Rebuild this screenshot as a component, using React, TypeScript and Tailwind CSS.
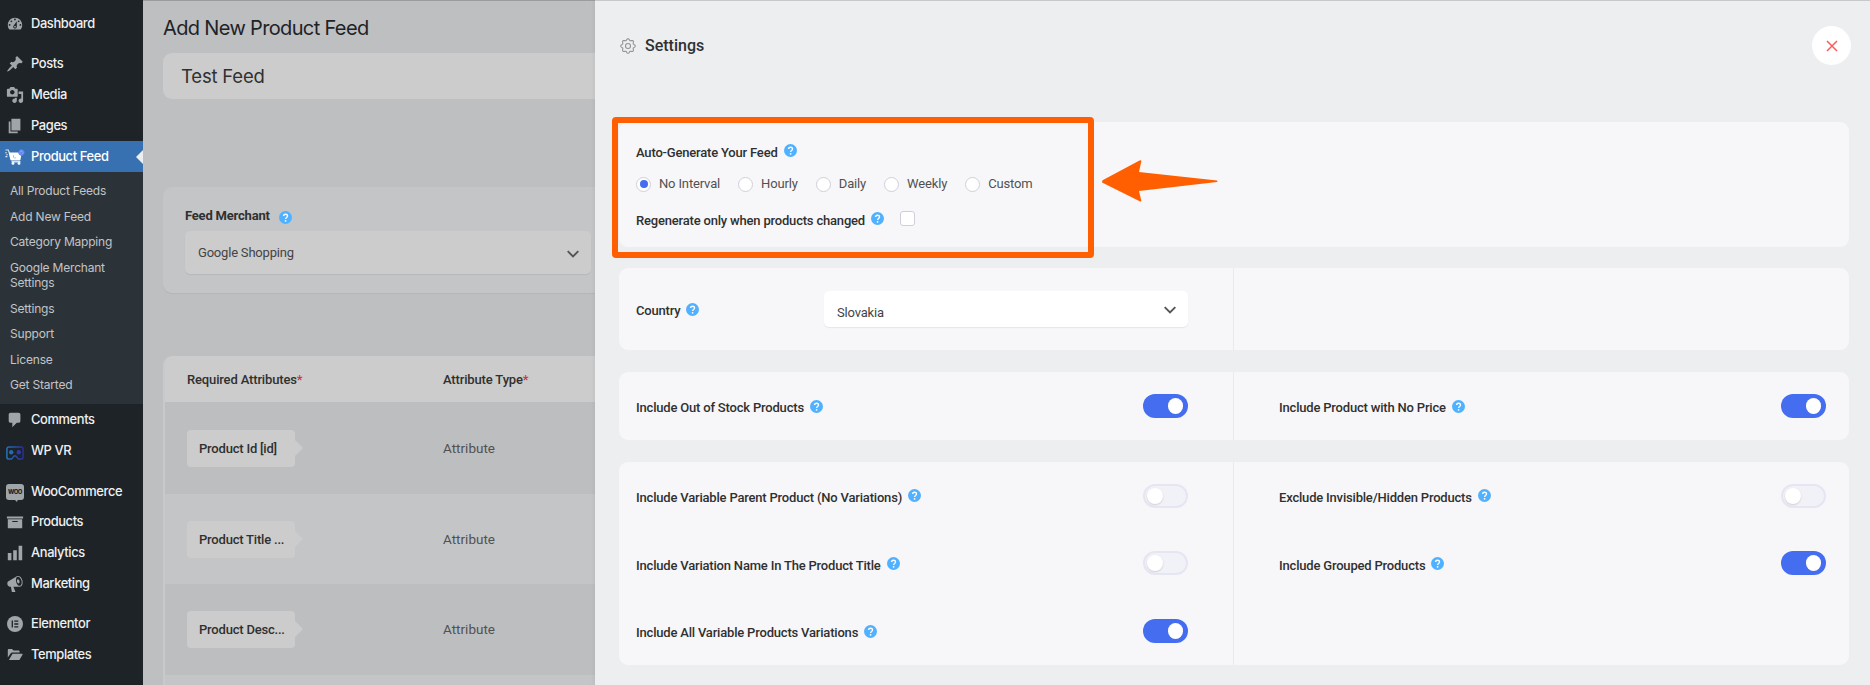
import React from 'react';

const DASHBOARD = 'M3.76 16h12.48c1.1-1.37 1.76-3.11 1.76-5 0-4.42-3.58-8-8-8s-8 3.58-8 8c0 1.89.66 3.63 1.76 5zM10 4c.55 0 1 .45 1 1s-.45 1-1 1-1-.45-1-1 .45-1 1-1zM6 6c.55 0 1 .45 1 1s-.45 1-1 1-1-.45-1-1 .45-1 1-1zm8 0c.55 0 1 .45 1 1s-.45 1-1 1-1-.45-1-1 .45-1 1-1zm-5.37 5.55L12 7v6c0 1.1-.9 2-2 2s-2-.9-2-2c0-.57.24-1.08.63-1.45zM4 10c.55 0 1 .45 1 1s-.45 1-1 1-1-.45-1-1 .45-1 1-1zm12 0c.55 0 1 .45 1 1s-.45 1-1 1-1-.45-1-1 .45-1 1-1zm-5 3c0-.55-.45-1-1-1s-1 .45-1 1 .45 1 1 1 1-.45 1-1z';
const PIN = 'M10.44 3.02l1.82-1.82 6.36 6.35-1.83 1.82c-1.05-.68-2.48-.57-3.41.36l-.75.75c-.92.93-1.04 2.35-.35 3.41l-1.83 1.82-2.41-2.41-2.8 2.79c-.42.42-3.38 2.71-3.8 2.29s1.86-3.39 2.28-3.81l2.79-2.79L4.1 9.36l1.83-1.82c1.05.69 2.48.57 3.4-.36l.75-.75c.93-.92 1.05-2.35.36-3.41z';
const MEDIA = 'M13 11V4c0-.55-.45-1-1-1h-1.67L9 1H5L3.67 3H2c-.55 0-1 .45-1 1v7c0 .55.45 1 1 1h10c.55 0 1-.45 1-1zM7 4.5c1.38 0 2.5 1.12 2.5 2.5S8.38 9.5 7 9.5 4.5 8.38 4.5 7 5.62 4.5 7 4.5zM14 6h5v10.5c0 1.38-1.12 2.5-2.5 2.5S14 17.88 14 16.5s1.12-2.5 2.5-2.5c.17 0 .34.02.5.05V9h-3V6zm-4 8.05V13h2v3.5c0 1.38-1.12 2.5-2.5 2.5S7 17.88 7 16.5 8.12 14 9.5 14c.17 0 .34.02.5.05z';
const PAGES = 'M6 15V2h10v13H6zm-1 1h8v2H3V5h2v11z';
const COMMENTS = 'M5 2h9c1.1 0 2 .9 2 2v7c0 1.1-.9 2-2 2h-2l-5 5v-5H5c-1.1 0-2-.9-2-2V4c0-1.1.9-2 2-2z';
const ARCHIVE = 'M19 4v2H1V4h18zM2 7h16v10H2V7zm11 3V9H7v1h6z';
const BARS = 'M18 18V2h-4v16h4zm-6 0V7H8v11h4zm-6 0v-8H2v8h4z';
const MEGAPHONE = 'M18.15 5.94c.46 1.62.38 3.22-.02 4.48-.42 1.28-1.26 2.18-2.3 2.48-.16.06-.26.06-.4.06-.06.02-.12.02-.18.02-.06.02-.14.02-.22.02h-6.8l2.22 5.5c.02.14-.06.26-.14.34-.08.1-.24.16-.34.16H6.95c-.1 0-.26-.06-.34-.16-.08-.08-.16-.2-.14-.34l-1-5.5H4.25l-.02-.02c-.5.06-1.08-.18-1.54-.62s-.88-1.08-1.06-1.88c-.24-.8-.2-1.56-.02-2.2.18-.62.58-1.08 1.06-1.3l.02-.02 9-5.4c.1-.06.18-.1.24-.16.06-.04.14-.08.24-.12.16-.08.28-.12.5-.18 1.04-.3 2.24.1 3.22.98s1.84 2.24 2.26 3.86zm-2.58 5.98h-.02c.4-.1.74-.34 1.04-.7.58-.7.86-1.76.86-3.04 0-.64-.1-1.3-.28-1.98-.34-1.36-1.02-2.5-1.78-3.24s-1.68-1.1-2.46-.88c-.82.22-1.4.96-1.7 2-.32 1.04-.28 2.36.06 3.72.38 1.36 1 2.5 1.8 3.24.78.74 1.62 1.1 2.48.88zm-2.54-7.08c.22-.04.42-.02.62.04.38.16.76.48 1.02 1s.42 1.2.42 1.78c0 .3-.04.56-.12.8-.18.48-.44.84-.86.94-.34.1-.8-.06-1.14-.4s-.64-.86-.78-1.5c-.18-.62-.12-1.24.02-1.72s.48-.84.82-.94z';

// Eight-lobed gear outline
const GEAR_POINTS = Array.from({ length: 96 }, (_, i) => {
  const a = (i / 96) * Math.PI * 2;
  const r = 9.7 + 1.2 * Math.cos(8 * a);
  return `${(12 + r * Math.cos(a)).toFixed(2)},${(12 + r * Math.sin(a)).toFixed(2)}`;
}).join(' ');

const MenuIcon = ({ d }: { d: string }) => (
  <svg viewBox="0 0 20 20" className="h-[18px] w-[18px] fill-[#a0a5aa]">
    <path fillRule="evenodd" d={d} />
  </svg>
);

const CartIcon = () => (
  <svg viewBox="0 0 20 16" className="h-4 w-5">
    <path d="M.5 1h2.700l1.300 3M.2 3.800h1.600M1.200 5.800h1.600M.4 7.600h2" stroke="#dbe8f7" strokeWidth="1.1" fill="none" />
    <path d="M3.600 3.600h13.200l-1.300 6.900c-.1.700-.6 1.100-1.300 1.100H6.700c-.7 0-1.200-.4-1.400-1.100z" fill="#fff" />
    <path d="M6.500 12.800h9" stroke="#fff" strokeWidth="1.2" />
    <circle cx="8" cy="14.400" r="1.4" fill="#fff" />
    <circle cx="14" cy="14.400" r="1.4" fill="#fff" />
    <path d="M8.500 6.200v2.100c.6 1 2 1 2.600 0" stroke="#8db5e6" strokeWidth="0.8" fill="none" />
    <circle cx="16.500" cy="3.400" r="2.800" fill="#7ba2f0" stroke="#4a73e6" strokeWidth="0.9" />
    <path d="M15.400 3.500l.8.9 1.500-1.700" stroke="#3f66dd" strokeWidth="0.8" fill="none" />
  </svg>
);

const VrIcon = () => (
  <svg viewBox="0 0 18 14" className="mt-1 h-[14px] w-[18px]">
    <defs>
      <linearGradient id="vr" x1="0" x2="1">
        <stop offset="0" stopColor="#2373b8" />
        <stop offset="1" stopColor="#2a2c9c" />
      </linearGradient>
    </defs>
    <path d="M3 .9h12a2.1 2.1 0 0 1 2.1 2.1v8a2.1 2.1 0 0 1-2.1 2.1h-2.6L10.3 10.4a1.7 1.7 0 0 0-2.6 0L5.6 13.1H3A2.1 2.1 0 0 1 .9 11V3A2.1 2.1 0 0 1 3 .9z" fill="none" stroke="url(#vr)" strokeWidth="1.5" />
    <circle cx="5.2" cy="6.3" r="2.2" fill="#2668b4" />
    <circle cx="12.8" cy="6.3" r="2.2" fill="#2b3bab" />
  </svg>
);

const WooIcon = () => (
  <span className="relative flex h-4 w-[18px] items-center justify-center rounded-[3px] bg-[#a0a5aa] font-['Inter',sans-serif] text-[6px] leading-none font-extrabold tracking-[-0.5px] text-[#1d2327]">
    WOO
    <svg viewBox="0 0 4 3" className="absolute top-[15px] left-[8px] h-[3px] w-1 fill-[#a0a5aa]"><path d="M0 0h4L3 3z" /></svg>
  </span>
);

const ElementorIcon = () => (
  <svg viewBox="0 0 16 16" className="h-4 w-4">
    <circle cx="8" cy="8" r="8" fill="#a0a5aa" />
    <path d="M5.3 4.5v7M7.3 5.2h4M7.3 8h4M7.3 10.8h4" stroke="#1d2327" strokeWidth="1.3" />
  </svg>
);

const FolderIcon = () => (
  <svg viewBox="0 0 16 13" className="h-[13px] w-4 fill-[#a0a5aa]">
    <path d="M.8 9.5V2c0-.6.5-1.1 1.1-1.1H5l1.5 1.6h5c.6 0 1.1.5 1.1 1.1v1H5.4c-.7 0-1.4.4-1.8 1z" />
    <path d="M5.5 5.7h9.4c.6 0 .9.6.6 1.1l-2.8 4.6c-.2.4-.6.6-1 .6H1.9z" />
  </svg>
);

const MenuItem = ({ icon, label, active }: { icon: React.ReactNode; label: string; active?: boolean }) => (
  <li className={active ? 'relative flex h-[31px] items-center bg-[#3871b1] text-white' : 'flex h-[31px] items-center text-[#f0f0f1]'}>
    <span className="ml-[5px] flex w-5 justify-center">{icon}</span>
    <span className="ml-[6px] text-[12.9px] font-medium tracking-[-0.38px]">{label}</span>
    {active && (
      <svg viewBox="0 0 7 14" className="absolute top-[9px] right-0 h-[14px] w-[7px] fill-[#edeef0]"><path d="M7 0v14L0 7z" /></svg>
    )}
  </li>
);

const Sidebar = () => (
  <aside className="h-full w-[143px] shrink-0 bg-[#1d2327] pt-2 font-['Inter',sans-serif]">
    <ul>
      <MenuItem icon={<MenuIcon d={DASHBOARD} />} label="Dashboard" />
    </ul>
    <ul className="mt-[9px]">
      <MenuItem icon={<MenuIcon d={PIN} />} label="Posts" />
      <MenuItem icon={<MenuIcon d={MEDIA} />} label="Media" />
      <MenuItem icon={<MenuIcon d={PAGES} />} label="Pages" />
      <MenuItem icon={<CartIcon />} label="Product Feed" active />
    </ul>
    <ul className="h-[232px] bg-[#2c3338] pt-[6px] pl-[10px] text-[12px] leading-[15.5px] tracking-[-0.2px] text-[#c3c4c7]">
      <li className="py-[5px]">All Product Feeds</li>
      <li className="py-[5px]">Add New Feed</li>
      <li className="py-[5px]">Category Mapping</li>
      <li className="py-[5px]">Google Merchant<br />Settings</li>
      <li className="py-[5px]">Settings</li>
      <li className="py-[5px]">Support</li>
      <li className="py-[5px]">License</li>
      <li className="py-[5px]">Get Started</li>
    </ul>
    <ul>
      <MenuItem icon={<MenuIcon d={COMMENTS} />} label="Comments" />
      <MenuItem icon={<VrIcon />} label="WP VR" />
    </ul>
    <ul className="mt-[10px]">
      <MenuItem icon={<WooIcon />} label="WooCommerce" />
    </ul>
    <ul className="-mt-px">
      <MenuItem icon={<MenuIcon d={ARCHIVE} />} label="Products" />
      <MenuItem icon={<MenuIcon d={BARS} />} label="Analytics" />
      <MenuItem icon={<MenuIcon d={MEGAPHONE} />} label="Marketing" />
    </ul>
    <ul className="mt-[9px]">
      <MenuItem icon={<ElementorIcon />} label="Elementor" />
      <MenuItem icon={<FolderIcon />} label="Templates" />
    </ul>
  </aside>
);

const Help = () => (
  <svg viewBox="0 0 13 13" className="h-[13px] w-[13px] shrink-0">
    <circle cx="6.5" cy="6.5" r="6.5" fill="#4fb1ff" />
    <path d="M4.6 5.1c0-2.5 3.9-2.5 3.9-.1 0 1.5-1.9 1.4-1.9 3" fill="none" stroke="#fff" strokeWidth="1.4" />
    <circle cx="6.6" cy="9.8" r="0.9" fill="#fff" />
  </svg>
);

const Chevron = () => (
  <svg viewBox="0 0 12 8" className="mt-0.5 h-2 w-3" fill="none" stroke="#555" strokeWidth="1.9">
    <path d="M.7 1.2L6 6.5l5.3-5.3" />
  </svg>
);

const AttributeRow = ({ name, className }: { name: string; className: string }) => (
  <div className={`flex items-center ${className}`}>
    <div className="relative ml-[22px] flex h-[37px] w-[108px] items-center rounded-[4px] bg-[#cccccc] pt-px pl-3 text-[13px] font-medium tracking-[-0.2px] text-[#303030]">
      {name}
      <svg viewBox="0 0 8 16" className="absolute top-[10px] left-[108px] h-4 w-2 fill-[#cccccc]"><path d="M0 0v16l8-8z" /></svg>
    </div>
    <span className="ml-[148px] text-[13.5px] text-[#515151]">Attribute</span>
  </div>
);

const FeedEditor = () => (
  <main className="h-full w-[452px] shrink-0 overflow-hidden border-t border-[#9b9c9e] bg-[#bdbfc1] pl-5 font-['Roboto',sans-serif]">
    <div className="w-[500px]">
      <h1 className="mt-[13px] h-[39px] font-['Inter',sans-serif] text-[20px] leading-[28px] tracking-[-0.65px] text-[#1d2327]">Add New Product Feed</h1>
      <div className="flex h-[46px] items-center rounded-[9px] bg-[#cccccc] pt-px pl-[18px] font-['Inter',sans-serif] text-[18.5px] tracking-[-0.2px] text-[#303030]">Test Feed</div>
      <section className="mt-[88px] h-[106px] rounded-[9px] bg-[#c4c5c7] pt-5 pl-[22px] shadow-[0_1px_1px_#b3b5b7]">
        <div className="flex h-[17px] items-center gap-[9px] text-[13px] font-bold tracking-[-0.2px] text-[#303030]">
          Feed Merchant
          <span className="mt-[3px]"><Help /></span>
        </div>
        <div className="mt-[7px] flex h-[43px] w-[406px] items-center justify-between rounded-[5px] bg-[#cccccc] pr-3 pl-[13px] text-[13px] tracking-[-0.2px] text-[#444] shadow-[0_1px_1px_#b6b8ba]">
          Google Shopping
          <Chevron />
        </div>
      </section>
      <section className="mt-[63px] rounded-t-[9px] border-l-2 border-[#c8c9ca] bg-[#cccccc]">
        <div className="flex h-[46px] items-center pt-[2px] pl-[22px] text-[13px] font-medium tracking-[-0.15px] text-[#303030]">
          <span className="w-[256px]">Required Attributes<span className="text-[#d13438]">*</span></span>
          <span>Attribute Type<span className="text-[#d13438]">*</span></span>
        </div>
        <AttributeRow name="Product Id [id]" className="h-[92px] bg-[#bdbec0]" />
        <AttributeRow name="Product Title ..." className="h-[90px] bg-[#c4c5c7]" />
        <AttributeRow name="Product Desc..." className="h-[91px] bg-[#bdbec0]" />
        <div className="h-5 bg-[#c4c5c7]" />
      </section>
    </div>
  </main>
);

const Toggle = ({ on }: { on?: boolean }) => (
  <span className={on
    ? 'flex h-6 w-[45px] items-center justify-end rounded-full bg-[#446df0] pr-[5px]'
    : 'flex h-6 w-[45px] items-center rounded-full border-2 border-[#e6e6f3] bg-[#f1f2f7] pl-[2px]'}
  >
    <span className={on ? 'h-4 w-[15px] rounded-full bg-white' : 'h-4 w-4 rounded-full bg-white shadow-[0_1px_2px_rgba(0,0,0,0.15)]'} />
  </span>
);

const SettingRow = ({ label, on, className }: { label: string; on?: boolean; className?: string }) => (
  <div className={`flex items-center justify-between ${className ?? ''}`}>
    <span className="flex items-center gap-[6px]">
      <span className="mt-[4px]">{label}</span>
      <Help />
    </span>
    <Toggle on={on} />
  </div>
);

const intervals = ['No Interval', 'Hourly', 'Daily', 'Weekly', 'Custom'];

const SettingsPanel = () => (
  <section className="h-full min-w-0 flex-1 border-t border-[#c7c8ca] bg-[#edeef0] pr-[21px] pl-[24px] font-['Roboto',sans-serif] text-[13px] font-medium tracking-[-0.19px] text-[#303030] shadow-[-1px_0_4px_rgba(0,0,0,0.06)]">
    <header className="flex h-[121px] items-start justify-between pt-[25px]">
      <h2 className="flex h-[39px] items-center gap-[9px] text-[16px] font-medium tracking-normal">
        <svg viewBox="0 0 24 24" className="ml-px h-4 w-4" fill="none" stroke="#919193" strokeWidth="1.6" strokeLinejoin="round">
          <polygon points={GEAR_POINTS} />
          <circle cx="12" cy="12" r="3.8" />
        </svg>
        Settings
      </h2>
      <button className="mr-[-2px] flex h-[39px] w-[39px] items-center justify-center rounded-full bg-white">
        <svg viewBox="0 0 12 12" className="h-[12px] w-[12px]" stroke="#fb5b5b" strokeWidth="1.5"><path d="M1 1l10 10M11 1L1 11" /></svg>
      </button>
    </header>

    <div className="relative h-[125px] rounded-[9px] bg-[#f7f7f9] pt-[21px] pl-[17px]">
      <div className="flex h-[20px] items-center gap-[6px]">
        Auto-Generate Your Feed
        <span className="mb-[5px]"><Help /></span>
      </div>
      <div className="mt-[11px] flex h-5 items-center gap-[18px] text-[13px] font-normal tracking-[-0.15px] text-[#515151]">
        {intervals.map((name, i) => (
          <label key={name} className="flex items-center gap-[8px]">
            <span className="flex h-[15px] w-[15px] items-center justify-center rounded-full border border-[#cfcfdc] bg-white">
              {i === 0 && <span className="h-2 w-2 rounded-full bg-[#446df0]" />}
            </span>
            {name}
          </label>
        ))}
      </div>
      <div className="mt-[17px] flex h-5 items-center">
        Regenerate only when products changed
        <span className="mb-[5px] ml-[6px]"><Help /></span>
        <span className="mb-[5px] ml-4 h-[15px] w-[15px] rounded-[3px] border border-[#cfcfdc] bg-white" />
      </div>

      {/* highlight and pointer laid over the card */}
      <div className="absolute top-[-5px] left-[-7px] h-[141px] w-[482px] rounded-[4px] border-[6px] border-[#ff5f00]" />
      <svg viewBox="0 0 116 42" className="absolute top-[38px] left-[483px] h-[42px] w-[116px] fill-[#ff5f00]">
        <path d="M0 21.5q0-1 1-1.5L37.5.5q2-.8 1.8 1L37 12l78 8.5q1 .8 0 1.5L37 31l2.3 9.5q.2 1.6-1.6.8L1 23q-1-.5-1-1.5z" />
      </svg>
    </div>

    <div className="mt-[21px] flex h-[82px] rounded-[9px] bg-[#f7f7f9]">
      <div className="flex w-[615px] items-center border-r border-[#e9e9f5] pl-[17px]">
        <div className="flex w-[188px] items-center gap-[6px]">
          <span className="mt-[4px]">Country</span>
          <Help />
        </div>
        <div className="flex h-[36px] w-[364px] items-center justify-between rounded-[5px] bg-white pr-3 pl-[13px] text-[13px] font-normal text-[#444] shadow-[0_1px_1px_#e2e5ec]">
          <span className="mt-[7px]">Slovakia</span>
          <Chevron />
        </div>
      </div>
    </div>

    <div className="mt-[22px] flex h-[68px] rounded-[9px] bg-[#f7f7f9]">
      <SettingRow label="Include Out of Stock Products" on className="w-[615px] border-r border-[#e9e9f5] pr-[45px] pl-[17px]" />
      <SettingRow label="Include Product with No Price" on className="flex-1 pr-[23px] pl-[45px]" />
    </div>

    <div className="mt-[22px] flex h-[203px] rounded-[9px] bg-[#f7f7f9]">
      <div className="grid w-[615px] grid-rows-3 border-r border-[#e9e9f5] pr-[45px] pl-[17px]">
        <SettingRow label="Include Variable Parent Product (No Variations)" />
        <SettingRow label="Include Variation Name In The Product Title" />
        <SettingRow label="Include All Variable Products Variations" on />
      </div>
      <div className="grid flex-1 grid-rows-3 pr-[23px] pl-[45px]">
        <SettingRow label="Exclude Invisible/Hidden Products" />
        <SettingRow label="Include Grouped Products" on />
      </div>
    </div>
  </section>
);

export default function App() {
  return (
    <div className="flex h-[685px] w-[1870px] overflow-hidden">
      <Sidebar />
      <FeedEditor />
      <SettingsPanel />
    </div>
  );
}
